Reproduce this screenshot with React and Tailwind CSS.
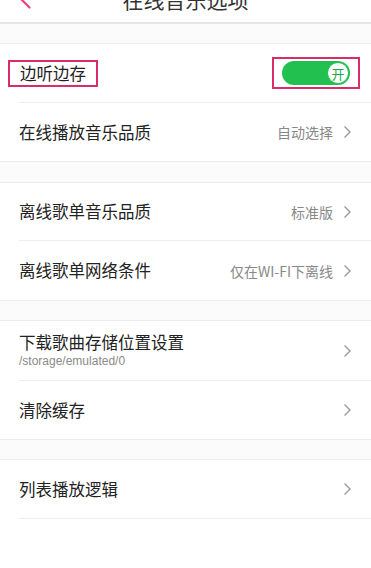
import { useState } from "react";

const font = { fontFamily: '"Noto Sans CJK SC", "Noto Sans", sans-serif' };

function Chevron() {
  return (
    <svg width="9" height="14" viewBox="0 0 9 14" className="shrink-0">
      <path d="M1.5 1.5 L7 7 L1.5 12.5" fill="none" stroke="#9a9a9a" strokeWidth="1.4" />
    </svg>
  );
}

function Gap({ h = "h-[20px]" }) {
  return <div className={h + " bg-[#fbfbfb] border-b border-[#ececec]"} />;
}

function Row({ title, sub, value, last, h = "h-[59px]" }) {
  return (
    <div className={h + " ml-[19px] flex items-center pr-[19px] " + (last ? "" : "border-b border-[#eeeeee]")}>
      <div className="flex-1 min-w-0">
        <div className={"text-[16.5px] text-[#222] " + (sub ? "leading-[20px]" : "leading-none")}>{title}</div>
        {sub && <div className="text-[12px] leading-[15px] text-[#8a8a8a] mt-[2px]" style={{ fontFamily: '"Liberation Sans", sans-serif' }}>{sub}</div>}
      </div>
      {value && <span className="text-[14px] text-[#888] mr-[10px] leading-none">{value}</span>}
      <Chevron />
    </div>
  );
}

export default function App() {
  const [on, setOn] = useState(true);

  return (
    <div className="w-[371px] h-[568px] bg-white overflow-hidden" style={font}>
      <div className="h-[24px] overflow-hidden grid grid-cols-[1fr_auto_1fr] border-b-2 border-[#e6e6e6]">
        <svg width="40" height="22" viewBox="0 0 40 22">
          <path d="M29.5 7.5 L18 -4" fill="none" stroke="#e8457d" strokeWidth="2.2" strokeLinecap="round" />
        </svg>
        <div className="text-[21px] leading-[22px] -mt-[12px] text-[#333]">在线音乐选项</div>
        <div />
      </div>
      <Gap />

      <div className="border-b border-[#ececec]">
        <div className="h-[59px] ml-[19px] flex items-center justify-between pr-[11px] border-b border-[#eeeeee]">
          <div className="-ml-[11px] px-[10px] h-[27px] flex items-center border-2 border-[#d92d6b]">
            <span className="text-[16.5px] text-[#222] leading-none">边听边存</span>
          </div>
          <div className="border-2 border-[#d92d6b] px-[8px] py-[2px] flex">
            <button
              onClick={() => setOn(!on)}
              className={"w-[68px] h-[24px] rounded-full flex items-center justify-end pr-[1px] " + (on ? "bg-[#22c04f]" : "bg-[#ddd]")}
            >
              <span className="w-[22px] h-[22px] rounded-full bg-white border-[1.5px] border-[#22c04f] flex items-center justify-center text-[13px] text-[#22a848] leading-none">
                开
              </span>
            </button>
          </div>
        </div>
        <Row title="在线播放音乐品质" value="自动选择" last h="h-[58px]" />
      </div>
      <Gap h="h-[21px]" />

      <div className="border-b border-[#ececec]">
        <Row title="离线歌单音乐品质" value="标准版" h="h-[58px]" />
        <Row title="离线歌单网络条件" value="仅在WI-FI下离线" last />
      </div>
      <Gap />

      <div className="border-b border-[#ececec]">
        <Row title="下载歌曲存储位置设置" sub="/storage/emulated/0" h="h-[60px]" />
        <Row title="清除缓存" last h="h-[58px]" />
      </div>
      <Gap />

      <Row title="列表播放逻辑" />
    </div>
  );
}
